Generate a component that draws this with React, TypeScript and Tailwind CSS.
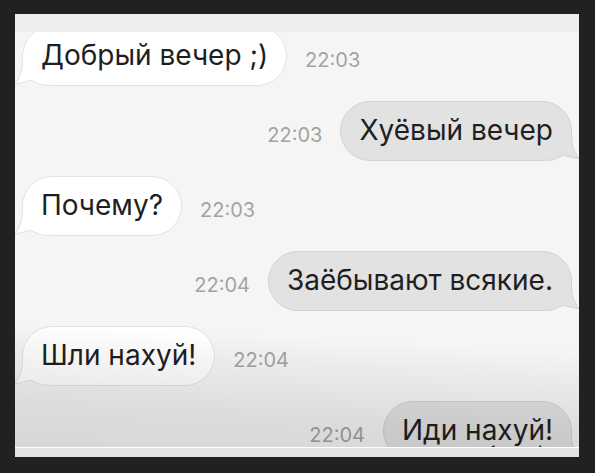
import React from 'react';
import clsx from 'clsx';

type Message = {
  text: string;
  time: string;
  mine: boolean;
};

const messages: Message[] = [
  { text: 'Добрый вечер ;)', time: '22:03', mine: false },
  { text: 'Хуёвый вечер', time: '22:03', mine: true },
  { text: 'Почему?', time: '22:03', mine: false },
  { text: 'Заёбывают всякие.', time: '22:04', mine: true },
  { text: 'Шли нахуй!', time: '22:04', mine: false },
  { text: 'Иди нахуй!', time: '22:04', mine: true },
];

// Tail points left by default, it is mirrored for own messages
function Tail({ mine }: { mine: boolean }) {
  return (
    <svg
      viewBox="0 0 32 32"
      className={clsx(
        'absolute -bottom-px h-8 w-8',
        mine ? '-right-2 -scale-x-100 text-[#e2e2e2]' : '-left-2 text-white'
      )}
      aria-hidden="true"
    >
      <path
        d="M7.5 0 C7.5 12 7.5 20 0 29.5 C6 29.5 11 27 15 26.5 C19 26.5 22 31 32 31.5 L32 0 Z"
        fill="currentColor"
      />
      <path
        d="M7.5 0 C7.5 12 7.5 20 0 29.5 C6 29.5 11 27 15 26.5 C19 26.5 22 31 32 31.5"
        fill="none"
        stroke={mine ? '#d2d2d2' : '#e2e2e2'}
      />
    </svg>
  );
}

function MessageRow({ text, time, mine }: Message) {
  return (
    <li className={clsx('flex items-center gap-[18px] px-[7px]', mine && 'flex-row-reverse')}>
      <div
        className={clsx(
          'relative h-[60px] shrink-0 rounded-[30px] border px-[18px] pt-2',
          mine ? 'border-[#d2d2d2] bg-[#e2e2e2]' : 'border-[#e2e2e2] bg-white'
        )}
      >
        <Tail mine={mine} />
        <p className="relative text-[28px] leading-10 whitespace-nowrap text-[#1f1f1f]">{text}</p>
      </div>
      <time className="pt-2 text-xl text-[#a3a3a3]">{time}</time>
    </li>
  );
}

export default function App() {
  return (
    <div className="flex h-screen flex-col bg-[#212121] pt-3.5 pr-4 pb-4 pl-[15px] font-['Inter','Liberation_Sans',sans-serif]">
      <main className="flex min-h-0 flex-1 flex-col bg-[#f5f5f5]">
        <div className="h-[18px] shrink-0 bg-[#eeeeee]" />
        <div className="relative min-h-0 flex-1 overflow-hidden">
          <ul className="-mt-1.5 flex flex-col gap-[15px]">
            {messages.map((message, i) => (
              <MessageRow key={i} {...message} />
            ))}
          </ul>
          <div className="pointer-events-none absolute inset-x-0 bottom-0 h-32 bg-[linear-gradient(183deg,transparent_20%,rgba(0,0,0,0.04)_38%,rgba(0,0,0,0.1)_72%,rgba(0,0,0,0.12)_100%)]" />
          {/* tops of the letters cut off by the bottom edge */}
          <svg viewBox="0 0 52 2" className="absolute right-[37px] bottom-0 h-0.5 w-[52px]" aria-hidden="true">
            <path d="M1 2 L4 0 L5 2 Z M49 2 L50 0 L52 2 Z" fill="#333333" />
          </svg>
        </div>
        <div className="h-2.5 shrink-0 border-t border-white bg-[#e3e3e3]" />
      </main>
    </div>
  );
}
